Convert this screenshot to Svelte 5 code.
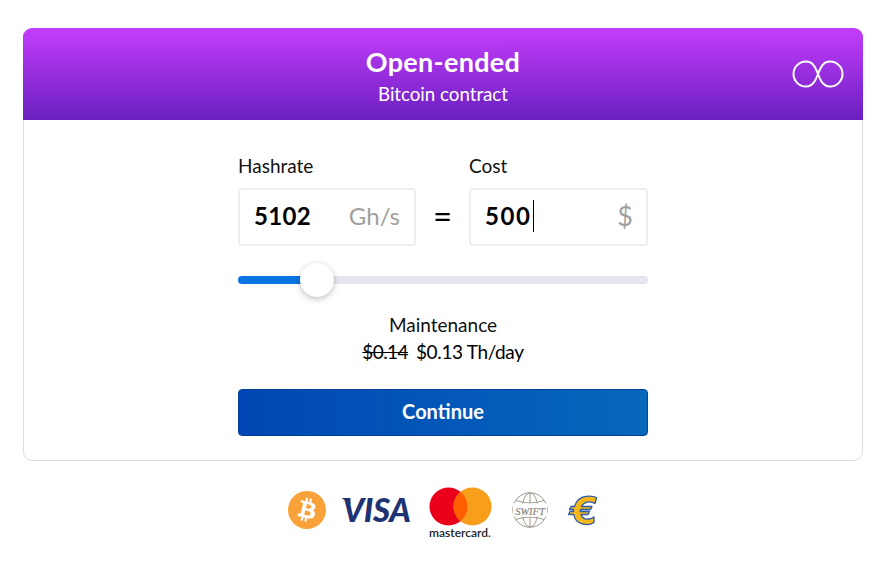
<script>
  const hashrate = 5102;
  const cost = 500;
</script>

<div class="page">
  <section class="card">
    <header class="head">
      <h1>Open-ended</h1>
      <p>Bitcoin contract</p>
      <svg class="inf" viewBox="0 0 52 28" width="52" height="28" aria-hidden="true">
        <path d="M14 1.500a12.500 12.500 0 0 0 0 25c7 0 9.500-6 12-12.500s5-12.500 12-12.500a12.500 12.500 0 0 1 0 25c-7 0-9.500-6-12-12.500s-5-12.500-12-12.500z" fill="none" stroke="#fff" stroke-width="2"/>
      </svg>
    </header>
    <div class="body">
      <div class="form">
        <div class="fields">
          <div class="field">
            <span class="label">Hashrate</span>
            <div class="box"><span class="val">{hashrate}</span><span class="unit">Gh/s</span></div>
          </div>
          <div class="eq">=</div>
          <div class="field">
            <span class="label">Cost</span>
            <div class="box"><span class="val caret">{cost}</span><span class="unit dollar">$</span></div>
          </div>
        </div>
        <div class="slider">
          <div class="fill"></div>
          <div class="thumb"></div>
        </div>
        <div class="maint">
          <div>Maintenance</div>
          <div class="price"><s>$0.14</s><span>$0.13 Th/day</span></div>
        </div>
        <button class="go">Continue</button>
      </div>
    </div>
  </section>

  <footer class="pay">
    <svg class="btc" viewBox="0 0 24 24" width="38" height="38" aria-label="Bitcoin">
      <path fill="#f9a23a" d="M23.638 14.904c-1.602 6.43-8.113 10.34-14.542 8.736C2.67 22.05-1.244 15.525.362 9.105 1.962 2.67 8.475-1.243 14.9.358c6.43 1.605 10.342 8.115 8.738 14.548v-.002zm-6.35-4.613c.24-1.59-.974-2.45-2.64-3.03l.54-2.153-1.315-.33-.525 2.107c-.345-.087-.705-.167-1.064-.25l.526-2.127-1.32-.33-.54 2.165c-.285-.067-.565-.132-.84-.2l-1.815-.45-.35 1.407s.975.225.955.236c.535.136.63.486.615.766l-1.477 5.92c-.075.166-.24.406-.614.314.015.02-.96-.24-.96-.24l-.66 1.51 1.71.426.93.242-.54 2.19 1.32.327.54-2.17c.36.1.705.19 1.05.273l-.51 2.154 1.32.33.545-2.19c2.24.427 3.93.257 4.64-1.774.57-1.637-.03-2.58-1.217-3.196.854-.193 1.5-.76 1.68-1.93h.01zm-3.01 4.22c-.404 1.64-3.157.75-4.05.53l.72-2.9c.896.23 3.757.67 3.33 2.37zm.41-4.24c-.37 1.49-2.662.735-3.405.55l.654-2.64c.744.18 3.137.524 2.75 2.084v.006z"/>
    </svg>
    <span class="visa">VISA</span>
    <div class="mc">
      <svg viewBox="0 0 63 39" width="63" height="39" aria-hidden="true">
        <circle cx="19.500" cy="19.500" r="19" fill="#eb001b"/>
        <circle cx="43.500" cy="19.500" r="19" fill="#f79e1b"/>
        <path d="M31.500 4.800a19 19 0 0 1 0 29.400a19 19 0 0 1 0-29.400z" fill="#ff5f00"/>
      </svg>
      <span>mastercard.</span>
    </div>
    <svg class="swift" viewBox="0 0 36 36" width="36" height="36" aria-label="SWIFT">
      <g fill="none" stroke="#a09a90" stroke-width="1">
        <circle cx="18" cy="18" r="17.200"/>
        <ellipse cx="18" cy="18" rx="8" ry="17.200"/>
        <path d="M18 1v34M4 8.500q14 5 28 0M4 27.500q14-5 28 0"/>
      </g>
      <rect x="1" y="11.500" width="34" height="13" fill="#fff"/>
      <text x="18" y="22.500" text-anchor="middle" class="swift-t">SWIFT</text>
    </svg>
    <svg class="euro" viewBox="0 0 32 32" width="32" height="32" aria-label="Euro">
      <path d="M29.500 3.500 28 9.500C25 7.500 20 7 17 9.500 15.800 10.500 15 11.500 14.500 12.500H25L23.500 15.500H13.500L13.300 17.500H22.500L21 20.500H14C15 24 18.500 25.500 22 25C24 24.800 25.500 24 27 23V28.500C24 30.500 19 31 15 29.800 10.500 28.500 7.500 25 6.800 20.500H1.500L3 17.500H6.500V15.500H2.500L4 12.500H7.500C9 7 13.500 3 19 2.300 22.500 1.800 26.500 2 29.500 3.500Z" fill="#f5b81c" stroke="#2a5aa8" stroke-width="1.300" stroke-linejoin="round"/>
    </svg>
  </footer>
</div>

<style>
  :global(body) { margin: 0; background: #fff; }
  .page {
    width: 884px;
    height: 563px;
    padding: 28px 21px 0 23px;
    box-sizing: border-box;
    font-family: Lato, "Open Sans", sans-serif;
    color: #111;
  }
  .card {
    border: 1px solid #dcdcdc;
    border-top: 0;
    border-radius: 9px;
    height: 433px;
    box-sizing: border-box;
  }
  .head {
    position: relative;
    height: 92px;
    margin: 0 -1px;
    border-radius: 9px 9px 0 0;
    background: linear-gradient(180deg, #c43dfb 0%, #6a1fc0 100%);
    color: #fff;
    text-align: center;
    box-sizing: border-box;
    padding-top: 18px;
  }
  .head h1 { margin: 0; font-size: 27px; font-weight: 700; line-height: 32px; letter-spacing: .3px; }
  .head p { margin: 3px 0 0; font-size: 18.700px; line-height: 26px; }
  .inf { position: absolute; right: 19px; top: 32px; }
  .body { display: flex; justify-content: center; padding-top: 34px; }
  .form { width: 410px; }
  .fields { display: flex; align-items: flex-end; }
  .field { display: flex; flex-direction: column; }
  .field:first-child { width: 178px; }
  .field:last-child { width: 179px; }
  .label { font-size: 19px; line-height: 24px; margin-bottom: 10px; }
  .box {
    height: 58px;
    box-sizing: border-box;
    border: 2px solid #eeeeee;
    border-radius: 4px;
    display: flex;
    justify-content: space-between;
    align-items: center;
    padding: 0 14px 3px;
  }
  .val { font-size: 24px; font-weight: 700; color: #000; letter-spacing: .3px; }
  .caret { border-right: 1px solid #000; line-height: 32px; padding-right: 1px; letter-spacing: 1.600px; }
  .unit { font-size: 24px; color: #a0a0a0; }
  .dollar { font-size: 27px; margin-right: -1px; }
  .eq { width: 53px; height: 58px; padding-bottom: 4px; box-sizing: border-box; display: flex; align-items: center; justify-content: center; font-size: 33px; color: #000; }
  .slider {
    position: relative;
    height: 8px;
    margin-top: 30px;
    background: #e3e6ea;
    border-radius: 4px;
  }
  .fill { width: 79px; height: 8px; border-radius: 4px 0 0 4px; background: #0a74e0; }
  .thumb {
    position: absolute;
    left: 62px;
    top: -13px;
    width: 34px;
    height: 34px;
    border-radius: 50%;
    background: #fff;
    box-shadow: 0 2px 6px rgba(0, 0, 0, .25);
  }
  .maint { margin-top: 27px; margin-bottom: 24px; text-align: center; font-size: 19px; line-height: 27px; }
  .price { display: flex; justify-content: center; gap: 8px; color: #000; letter-spacing: -.35px; }
  .price s { letter-spacing: -.6px; }
  .go {
    display: block;
    width: 100%;
    height: 47px;
    padding-bottom: 4px;
    border: 1px solid #03409a;
    border-radius: 4px;
    background: linear-gradient(90deg, #0046b4 0%, #0768bb 100%);
    color: #fff;
    font: 700 20px Lato, sans-serif;
  }
  .pay {
    display: flex;
    align-items: flex-start;
    justify-content: center;
    margin-top: 26px;
  }
  .btc { margin-top: 4px; margin-right: 17px; }
  .visa {
    position: relative;
    font: italic 900 33px/1 Lato, sans-serif;
    color: #1f3373;
    width: 68px;
    letter-spacing: -.4px;
    margin-top: 6px;
    margin-right: 18px;
  }
  .visa::before {
    content: "";
    position: absolute;
    left: -1px;
    top: 5px;
    width: 9px;
    height: 6px;
    background: #1f3373;
    clip-path: polygon(0 0, 100% 0, 100% 100%);
  }
  .mc { display: flex; flex-direction: column; align-items: center; width: 63px; margin-right: 20px; }
  .mc svg { display: block; }
  .mc span { font: 600 12px/13px Lato, sans-serif; color: #222; }
  .swift { margin-top: 5px; margin-right: 19px; }
  .swift-t { font: italic 10.500px "Liberation Serif", serif; fill: #8a8478; stroke: #8a8478; stroke-width: .2px; }
  .euro { margin-top: 7px; }
</style>
